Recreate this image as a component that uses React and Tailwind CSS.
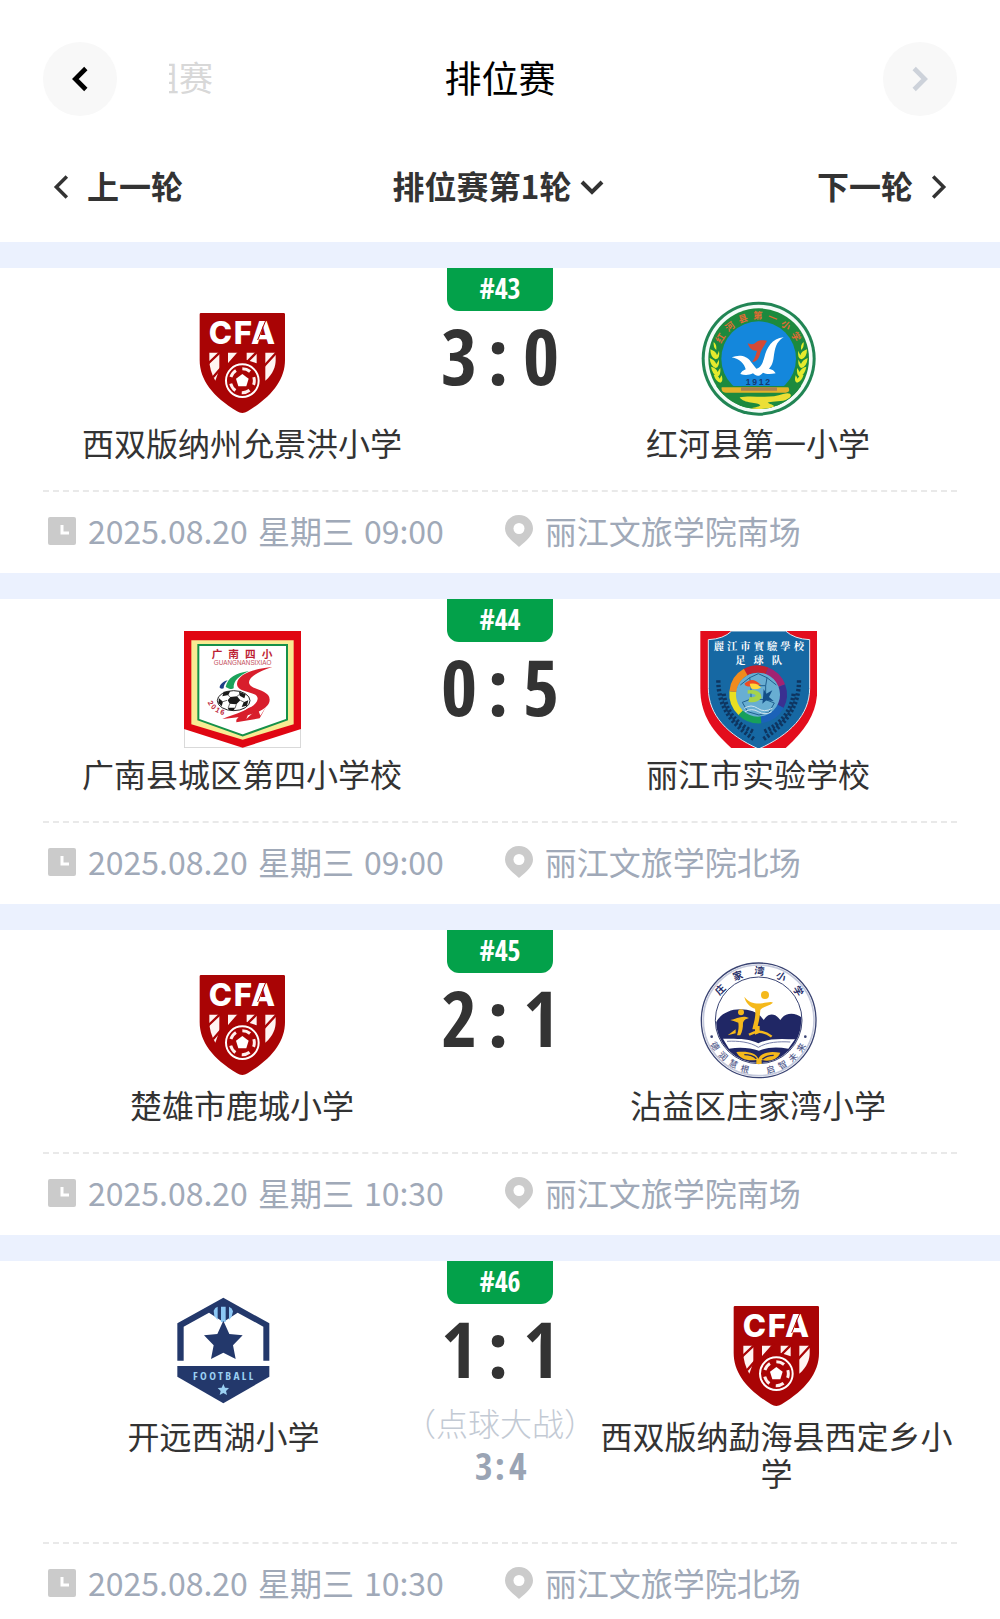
// src/App.jsx

import React, { useState } from 'react';

// Match list for the selected round
const matchesData = [
    {
        id: '43',
        home: { name: '西双版纳州允景洪小学', logo: 'cfa' },
        away: { name: '红河县第一小学', logo: 'honghe' },
        score: [3, 0],
        date: '2025.08.20',
        weekday: '星期三',
        time: '09:00',
        venue: '丽江文旅学院南场',
    },
    {
        id: '44',
        home: { name: '广南县城区第四小学校', logo: 'guangnan' },
        away: { name: '丽江市实验学校', logo: 'lijiang' },
        score: [0, 5],
        date: '2025.08.20',
        weekday: '星期三',
        time: '09:00',
        venue: '丽江文旅学院北场',
    },
    {
        id: '45',
        home: { name: '楚雄市鹿城小学', logo: 'cfa' },
        away: { name: '沾益区庄家湾小学', logo: 'zhanyi' },
        score: [2, 1],
        date: '2025.08.20',
        weekday: '星期三',
        time: '10:30',
        venue: '丽江文旅学院南场',
    },
    {
        id: '46',
        home: { name: '开远西湖小学', logo: 'football' },
        away: { name: '西双版纳勐海县西定乡小学', logo: 'cfa' },
        score: [1, 1],
        penalty: [3, 4],
        date: '2025.08.20',
        weekday: '星期三',
        time: '10:30',
        venue: '丽江文旅学院北场',
    },
];

const Chevron = ({ d, className, width = 3 }) => (
    <svg viewBox="0 0 24 24" className={className} fill="none" stroke="currentColor" strokeWidth={width} aria-hidden="true">
        <path d={d} />
    </svg>
);

const LEFT = 'M17 3 8 12l9 9';
const RIGHT = 'M7 3l9 9-9 9';
const DOWN = 'M2 7l10 10L22 7';

const ClockIcon = () => (
    <svg viewBox="0 0 28 28" className="size-7 shrink-0" aria-hidden="true">
        <rect x="0" y="0" width="28" height="28" rx="2" fill="#cbcbcb" />
        <path d="M14 8v8h7" fill="none" stroke="#fff" strokeWidth="3" />
    </svg>
);

const PinIcon = () => (
    <svg viewBox="0 0 28 32" className="h-8 w-7 shrink-0" aria-hidden="true">
        <path d="M14 0C6 0 0 6 0 13.500c0 7 6 11.500 14 18.500 8-7 14-11.500 14-18.500C28 6 22 0 14 0z" fill="#cbcbcb" />
        <circle cx="14" cy="13.500" r="5.500" fill="#fff" />
    </svg>
);

// Default crest used by teams that have no logo of their own
const CfaLogo = () => (
    <svg viewBox="41 30 351 351" className="size-[117px]" role="img" aria-label="CFA">
        <path d="M92 69H340q4 0 4 4V210c0 60-40 110-112 154q-16 10-32 0C128 320 88 270 88 210V73q0-4 4-4z" fill="#a90405" />
        <text x="115 190 242" y="163" fontSize="94" fill="#fff" className="font-['Inter',sans-serif] font-extrabold">CFA</text>
        <path d="M262 150 286 92" stroke="#a90405" strokeWidth="3" />
        <g fill="#fff4f2">
            <path d="M117 188h30v50l-12 34c-12-20-18-42-18-62z" />
            <path d="M173 188h31l-24 32h-7z" />
            <path d="M229 188h30v32l-30-10z" />
            <path d="M285 188h31v22c0 20-8 42-31 62z" />
        </g>
        <path d="M112 222 152 184M168 230l42-48M224 222l40-40M278 232l44-48M128 262l26-30" stroke="#a90405" strokeWidth="7" />
        <circle cx="216" cy="272" r="56" fill="#a90405" />
        <circle cx="216" cy="272" r="49" fill="none" stroke="#fff" strokeWidth="6" />
        <circle cx="216" cy="272" r="36" fill="none" stroke="#fff0ee" strokeWidth="9" strokeDasharray="25 20.200" strokeDashoffset="-33" />
        <path d="M216 252l19 14-7 23h-24l-7-23z" fill="#fff" />
    </svg>
);

const HongheLogo = () => (
    <svg viewBox="57 30 351 351" className="size-[117px]" role="img" aria-label="红河县第一小学">
        <defs>
            <path id="honghe-arc" d="M112 208A121 121 0 0 1 354 208" />
            <clipPath id="honghe-clip"><circle cx="233" cy="206" r="151" /></clipPath>
        </defs>
        <circle cx="233" cy="206" r="171" fill="#218554" />
        <circle cx="233" cy="206" r="162" fill="#f4fbf8" />
        <circle cx="233" cy="206" r="151" fill="#1c8a3e" />
        <circle cx="233" cy="206" r="112" fill="#1487dc" />
        <g clipPath="url(#honghe-clip)">
            <path d="M80 288H390V380H80z" fill="#1c8a3e" />
            <path d="M122 292h200q8 14-8 16H134q-14-2-12-16z" fill="#e2b32b" />
            <path d="M180 292h108v10H180z" fill="#a9814f" />
            <path d="M176 322c36-8 90 6 130-10 30-8 30 10 8 18-20 6-46 4-54 8 10 6 22 6 20 16-4 10-60 12-72 2 10-4 24-4 30-10-6-10-50-4-62-24z" fill="#ecdf35" />
        </g>
        <g fill="#e5ea2d">
            <path d="M98 156q10 8 8 24-10-8-8-24z" />
            <path d="M88 178q18 6 20 18 6-14 6-14 4 22-10 26-16-6-16-30zM86 204q16 6 20 18 8-12 8-14 2 24-10 26-16-6-18-30zM90 230q16 4 20 16 6-10 8-12 2 22-8 26-16-6-20-30zM98 254q14 2 18 12 4-8 6-10 6 20-4 22-14-4-20-24z" />
            <path d="M368 156q-10 8-8 24 10-8 8-24z" />
            <path d="M378 178q-18 6-20 18-6-14-6-14-4 22 10 26 16-6 16-30zM380 204q-16 6-20 18-8-12-8-14-2 24 10 26 16-6 18-30zM376 230q-16 4-20 16-6-10-8-12-2 22 8 26 16-6 20-30zM368 254q-14 2-18 12-4-8-6-10-6 20 4 22 14-4 20-24z" />
        </g>
        <path d="M152 202c22-8 44-6 58 14l16 20c14-4 18-14 24-34 8-30 22-56 58-60-24 14-26 34-30 60-2 18-8 28-14 34 10 2 16 6 20 14-18 4-30 2-38-2-10 12-20 12-30 2-12 6-26 6-38 2 4-8 8-10 16-14-4-16-18-32-42-36z" fill="#fff" />
        <path d="M200 160c12 4 18 4 26-4 8-6 16-6 32-4-8 16-18 26-22 44-4 12-10 20-22 20 8-12 12-26 14-34-14 2-22-6-28-22z" fill="#d44a35" />
        <text x="233" y="284" textAnchor="middle" fontSize="26" letterSpacing="5" fill="#163a72" className="font-['Liberation_Sans',sans-serif] font-bold">1912</text>
        <text fontSize="28" fill="#e06a34" className="font-['Noto_Sans_CJK_SC',sans-serif] font-bold">
            <textPath href="#honghe-arc" startOffset="51%" textAnchor="middle" letterSpacing="14">红河县第一小学</textPath>
        </text>
    </svg>
);

const GuangnanLogo = () => (
    <svg viewBox="41 48 351 351" className="size-[117px]" role="img" aria-label="广南四小">
        <defs>
            <path id="guangnan-arc" d="M112 262Q130 302 186 304" />
        </defs>
        <path d="M42 49H391V398H42z" fill="#fff" stroke="#bbb" strokeWidth="2" />
        <path d="M41 48H392V342L217 398 41 342z" fill="#e00612" />
        <path d="M63 76H370V328L217 374 63 328z" fill="#f8eb93" />
        <path d="M84 90H350V314L217 361 84 314z" fill="#fff" stroke="#159149" strokeWidth="6" />
        <text x="224" y="130" textAnchor="middle" fontSize="32" letterSpacing="18" fill="#bd1f35" className="font-['Noto_Sans_CJK_SC',sans-serif] font-bold">广南四小</text>
        <text x="217" y="149" textAnchor="middle" fontSize="19" fill="#c3505c" className="font-['Liberation_Sans',sans-serif]">GUANGNANSIXIAO</text>
        <path d="M306 156c-46 4-104 18-106 50 0 30 60 20 62 44 0 28-60 44-106 62 70-4 142-24 142-58 0-32-62-28-62-52 0-18 34-34 70-46z" fill="#d81e2c" />
        <path d="M236 168c-40 6-64 20-70 48 10 6 18 8 24 4-2-24 18-38 46-52z" fill="#1ba25a" />
        <path d="M172 196c-16 4-24 14-24 22 4 4 8 4 12 2 0-8 4-16 12-24z" fill="#1d3f86" />
        <path d="M198 314c20-22 30-34 44-38l-14 36 34-32 8 22 18-28-20 36-70 12z" fill="#d81e2c" />
        <ellipse cx="190" cy="257" rx="49" ry="30" fill="#fff" stroke="#222" strokeWidth="3" />
        <g fill="#1a1a1a">
            <path d="M180 246l20-2 10 12-12 12-20-2-6-10zM160 230l20-2-6 12-18 4zM206 230l20 8-4 12-14-8zM146 250l12 10-4 14-10-10zM220 262l14-6-4 16-16 4zM172 278l22 0-4 9-14-2z" />
        </g>
        <path d="M172 240l8 6M200 244l8-6M210 256l12 6M198 268l-4 12M178 266l-4 12M170 256l-12 4" stroke="#222" strokeWidth="2" />
        <text fontSize="22" letterSpacing="5" fill="#bd2438" className="font-['Liberation_Sans',sans-serif] font-bold">
            <textPath href="#guangnan-arc">2016</textPath>
        </text>
    </svg>
);

const LijiangLogo = () => (
    <svg viewBox="57 48 351 351" className="size-[117px]" role="img" aria-label="丽江市实验学校足球队">
        <path d="M58 48H409V220c0 70-30 120-96 180H152C84 340 58 290 58 220z" fill="#e30d1d" />
        <path d="M152 48h162q26 24 72 26v146c0 80-60 140-153 182C140 360 82 300 82 220V74q46-2 70-26z" fill="#1668a3" stroke="#dde9f2" strokeWidth="3" />
        <text x="238" y="105" textAnchor="middle" fontSize="31" letterSpacing="9" fill="#fff" className="font-['Noto_Serif_CJK_SC','Noto_Sans_CJK_SC',serif] font-bold">麗江市實驗學校</text>
        <text x="245" y="146" textAnchor="middle" fontSize="31" letterSpacing="24" fill="#fff" className="font-['Noto_Serif_CJK_SC','Noto_Sans_CJK_SC',serif] font-bold">足球队</text>
        <g fill="none" stroke="#0e3560" strokeWidth="13" strokeDasharray="7 6">
            <path d="M112 196c0 80 40 130 106 176" />
            <path d="M354 196c0 80-40 130-106 176" />
            <path d="M128 236c6 50 36 90 88 114M338 236c-6 50-36 90-88 114" />
        </g>
        <g fill="none" strokeWidth="22">
            <path d="M192 172A76 76 0 0 1 258 168" stroke="#c5202e" />
            <path d="M258 168A76 76 0 0 1 302 212" stroke="#a12372" />
            <path d="M302 212A76 76 0 0 1 298 274" stroke="#3a3091" />
            <path d="M298 274A76 76 0 0 1 240 314" stroke="#1b62b8" />
            <path d="M240 314A76 76 0 0 1 180 292" stroke="#17a05a" />
            <path d="M180 292A76 76 0 0 1 156 230" stroke="#e8df22" />
            <path d="M156 230A76 76 0 0 1 194 171" stroke="#f08b1d" />
        </g>
        <circle cx="231" cy="239" r="66" fill="#68aed2" />
        <g fill="none" stroke="#20608f" strokeWidth="3">
            <path d="M206 188l26-12 26 12-4 24h-44zM206 188l-28 22M258 188l28 22M184 262l26-10 44 2 26 10-16 28-30 8-34-10zM210 212v40M254 212v42" />
        </g>
        <path d="M190 206c20-16 30-14 50 4-20-4-24 10-46 2z" fill="#ee4b22" />
        <path d="M206 206q24-4 34 12-18 8-30 2z" fill="#ffd83a" />
        <path d="M200 226q40-6 42 22-16 18-40 12l4-14q18 2 18-6-8-6-24-4z" fill="#a6d34b" />
        <path d="M248 222l8 14 18-10-10 20 14 12-22-2-12 10 2-18z" fill="#134f87" />
        <path d="M190 280q20-14 40 0t44 0M192 290q20-12 40 0t40 0" fill="none" stroke="#cfe4ef" strokeWidth="3" />
    </svg>
);

const ZhanyiLogo = () => (
    <svg viewBox="57 34 351 351" className="size-[117px]" role="img" aria-label="庄家湾小学">
        <defs>
            <path id="zhanyi-top" d="M97 209A136 136 0 0 1 369 209" />
            <path id="zhanyi-bottom" d="M72 209A161 161 0 0 0 394 209" />
            <clipPath id="zhanyi-clip"><circle cx="233" cy="209" r="128" /></clipPath>
        </defs>
        <circle cx="233" cy="209" r="172" fill="#fff" stroke="#3a4473" strokeWidth="4" />
        <circle cx="233" cy="209" r="166" fill="none" stroke="#c4c9dc" strokeWidth="5" />
        <circle cx="233" cy="209" r="130" fill="#fff" stroke="#3a4473" strokeWidth="3" />
        <g clipPath="url(#zhanyi-clip)">
            <path d="M100 230c6-30 36-54 78-54 30 0 56 10 70 32 14-22 34-22 50 0 16-26 50-24 72 0V350H100z" fill="#202765" />
        </g>
        <g fill="#f5b91c">
            <circle cx="252" cy="133" r="12" />
            <path d="M190 138c14 20 34 22 54 20 14-2 26-6 32-2-10 10-32 12-38 22-2 24-4 32-10 58h-14c4-20 12-40 8-62-16-6-28-18-32-36z" />
            <circle cx="180" cy="185" r="9" />
            <path d="M148 208c20-4 36-16 56-6-8 2-16 6-18 14 0 16-2 26-8 38h-10c4-12 6-24 4-38-8-2-16-6-24-8zM164 236v12l-24 6zM222 226h14v20l-14 6z" />
        </g>
        <path d="M204 252q36-20 68 6" fill="none" stroke="#f5b91c" strokeWidth="7" />
        <path d="M126 264c34 0 78-2 106 14 30-16 70-14 110-12l-20 28c-36-6-64-4-88 6-26-8-54-12-90-6z" fill="#fff" />
        <path d="M138 272c34-2 70 2 94 18 26-16 62-18 96-16" fill="none" stroke="#7880aa" strokeWidth="3" />
        <path d="M166 304c36-4 60 4 66 20 10-18 34-24 66-18-8 20-32 28-56 22v12h-16v-12c-28 4-50-4-60-24z" fill="#f5b91c" />
        <path d="M190 312q24 0 36 12M278 314q-22 0-34 12" fill="none" stroke="#202765" strokeWidth="4" />
        <circle cx="92" cy="258" r="4" fill="#3a4473" />
        <circle cx="373" cy="258" r="4" fill="#3a4473" />
        <text fontSize="30" letterSpacing="32" fill="#29316b" className="font-['Noto_Sans_CJK_SC',sans-serif] font-bold">
            <textPath href="#zhanyi-top" startOffset="54%" textAnchor="middle">庄家湾小学</textPath>
        </text>
        <text fontSize="26" letterSpacing="15" fill="#555d8c" className="font-['Noto_Sans_CJK_SC',sans-serif] font-medium">
            <textPath href="#zhanyi-bottom" startOffset="51%" textAnchor="middle">德润慧根　启智未来</textPath>
        </text>
    </svg>
);

const FootballLogo = () => (
    <svg viewBox="44 39 351 351" className="size-[117px]" role="img" aria-label="Football">
        <path d="M81 242V130L219 53l138 77v112h-18V140L262 98l-43 28-43-28-76 42v102z" fill="#23386b" />
        <path d="M190 92q4-10 12-12v40l-10-12zM212 80h14v46h-14zM236 80q10 4 12 14l-4 16-8 10z" fill="#8cc8f5" />
        <path d="M219 122l18 40 40 4-29 30 8 41-37-19-37 19 8-41-29-30 40-4z" fill="#23386b" />
        <path d="M81 258H357V290L219 370 81 290z" fill="#23386b" />
        <text x="222" y="301" textAnchor="middle" fontSize="34" letterSpacing="7" fill="#9bd0f3" className="font-['Open_Sans_Condensed','Roboto_Condensed',sans-serif] font-bold">FOOTBALL</text>
        <path d="M219 312l5 11 12 1-9 9 3 12-11-6-11 6 3-12-9-9 12-1z" fill="#9bd0f3" />
    </svg>
);

const logos = {
    cfa: CfaLogo,
    honghe: HongheLogo,
    guangnan: GuangnanLogo,
    lijiang: LijiangLogo,
    zhanyi: ZhanyiLogo,
    football: FootballLogo,
};

const Team = ({ team }) => {
    const Logo = logos[team.logo];

    return (
        <div className="flex min-w-0 flex-1 flex-col items-center pt-8">
            <Logo />
            <p className="mt-[7px] text-center text-[32px] leading-[37px] text-[#333]">{team.name}</p>
        </div>
    );
};

const MatchCard = ({ match }) => (
    <article className="border-t-26 border-[#ebf1fe] bg-white px-[43px]">
        <div className="flex pb-[29px]">
            <Team team={match.home} />
            <div className="flex min-w-[118px] flex-col items-center font-['Open_Sans_Condensed','Roboto_Condensed','Noto_Sans_CJK_SC',sans-serif]">
                <span className="flex h-[43px] w-[106px] items-center justify-center rounded-b-xl bg-[#03a14a] pb-1 text-[28px] leading-none font-bold text-white">
                    #{match.id}
                </span>
                <div className="mt-1 grid grid-cols-[32px_50px_36px] text-center text-[78px] leading-[80px] font-bold text-[#333]">
                    <span>{match.score[0]}</span>
                    <span>:</span>
                    <span>{match.score[1]}</span>
                </div>
                {match.penalty && (
                    <div className="pb-6 text-center">
                        <p className="mt-4 font-['Noto_Sans_CJK_SC',sans-serif] text-[32px] leading-[37px] font-light text-[#c3cad4]">（点球大战）</p>
                        <p className="grid grid-cols-[16px_18px_16px] justify-center text-[38px] leading-[48px] font-bold text-[#9aa4b4]">
                            <span>{match.penalty[0]}</span>
                            <span>:</span>
                            <span>{match.penalty[1]}</span>
                        </p>
                    </div>
                )}
            </div>
            <Team team={match.away} />
        </div>
        <div className="flex h-[83px] items-center gap-[61px] border-t-2 border-dashed border-[#e9e9e9] px-[5px] pb-1 text-[32px] leading-[37px] text-[#a0a9b8]">
            <div className="flex items-center gap-3">
                <ClockIcon />
                <time className="flex gap-[10px]">
                    <span>{match.date}</span>
                    <span>{match.weekday}</span>
                    <span>{match.time}</span>
                </time>
            </div>
            <div className="flex items-center gap-3">
                <PinIcon />
                <span>{match.venue}</span>
            </div>
        </div>
    </article>
);

export default function App() {
    const [round, setRound] = useState('1');

    return (
        <div className="overflow-x-hidden bg-white font-['Noto_Sans_CJK_SC',sans-serif]">
            <header className="px-[43px] pt-[42px]">
                {/* Stage switcher */}
                <div className="grid grid-cols-[1fr_auto_1fr] items-center">
                    <div className="flex items-center">
                        <button type="button" aria-label="上一阶段" className="flex size-[74px] items-center justify-center rounded-full bg-[#f8f8f8] text-black">
                            <Chevron d={LEFT} className="size-7" width={4} />
                        </button>
                        <span className="ml-[52px] flex w-11 justify-end overflow-hidden pb-1 text-[34px] leading-[44px] whitespace-nowrap text-[#d8d8d8]">小组赛</span>
                    </div>
                    <h1 className="pb-1 text-[37px] leading-[44px] text-black">排位赛</h1>
                    <button type="button" aria-label="下一阶段" className="flex size-[74px] items-center justify-center justify-self-end rounded-full bg-[#f8f8f8] text-[#cdd2da]">
                        <Chevron d={RIGHT} className="size-7" width={4} />
                    </button>
                </div>

                {/* Round switcher */}
                <div className="mt-4 grid h-[110px] grid-cols-[1fr_auto_1fr] items-center px-1 text-[32px] leading-[40px] font-bold text-[#333]">
                    <button type="button" className="flex items-center gap-3 justify-self-start">
                        <Chevron d={LEFT} className="size-7" />
                        <span className="pb-1">上一轮</span>
                    </button>
                    <label className="flex items-center gap-2 pr-1">
                        <select
                            aria-label="选择轮次"
                            value={round}
                            onChange={(e) => setRound(e.target.value)}
                            className="appearance-none bg-transparent pb-1"
                        >
                            <option value="1">排位赛第1轮</option>
                        </select>
                        <Chevron d={DOWN} className="size-6" width={4} />
                    </label>
                    <button type="button" className="flex items-center gap-3 justify-self-end">
                        <span className="pb-1">下一轮</span>
                        <Chevron d={RIGHT} className="size-7" />
                    </button>
                </div>
            </header>

            <main>
                {matchesData.map((match) => (
                    <MatchCard key={match.id} match={match} />
                ))}
            </main>
        </div>
    );
}
